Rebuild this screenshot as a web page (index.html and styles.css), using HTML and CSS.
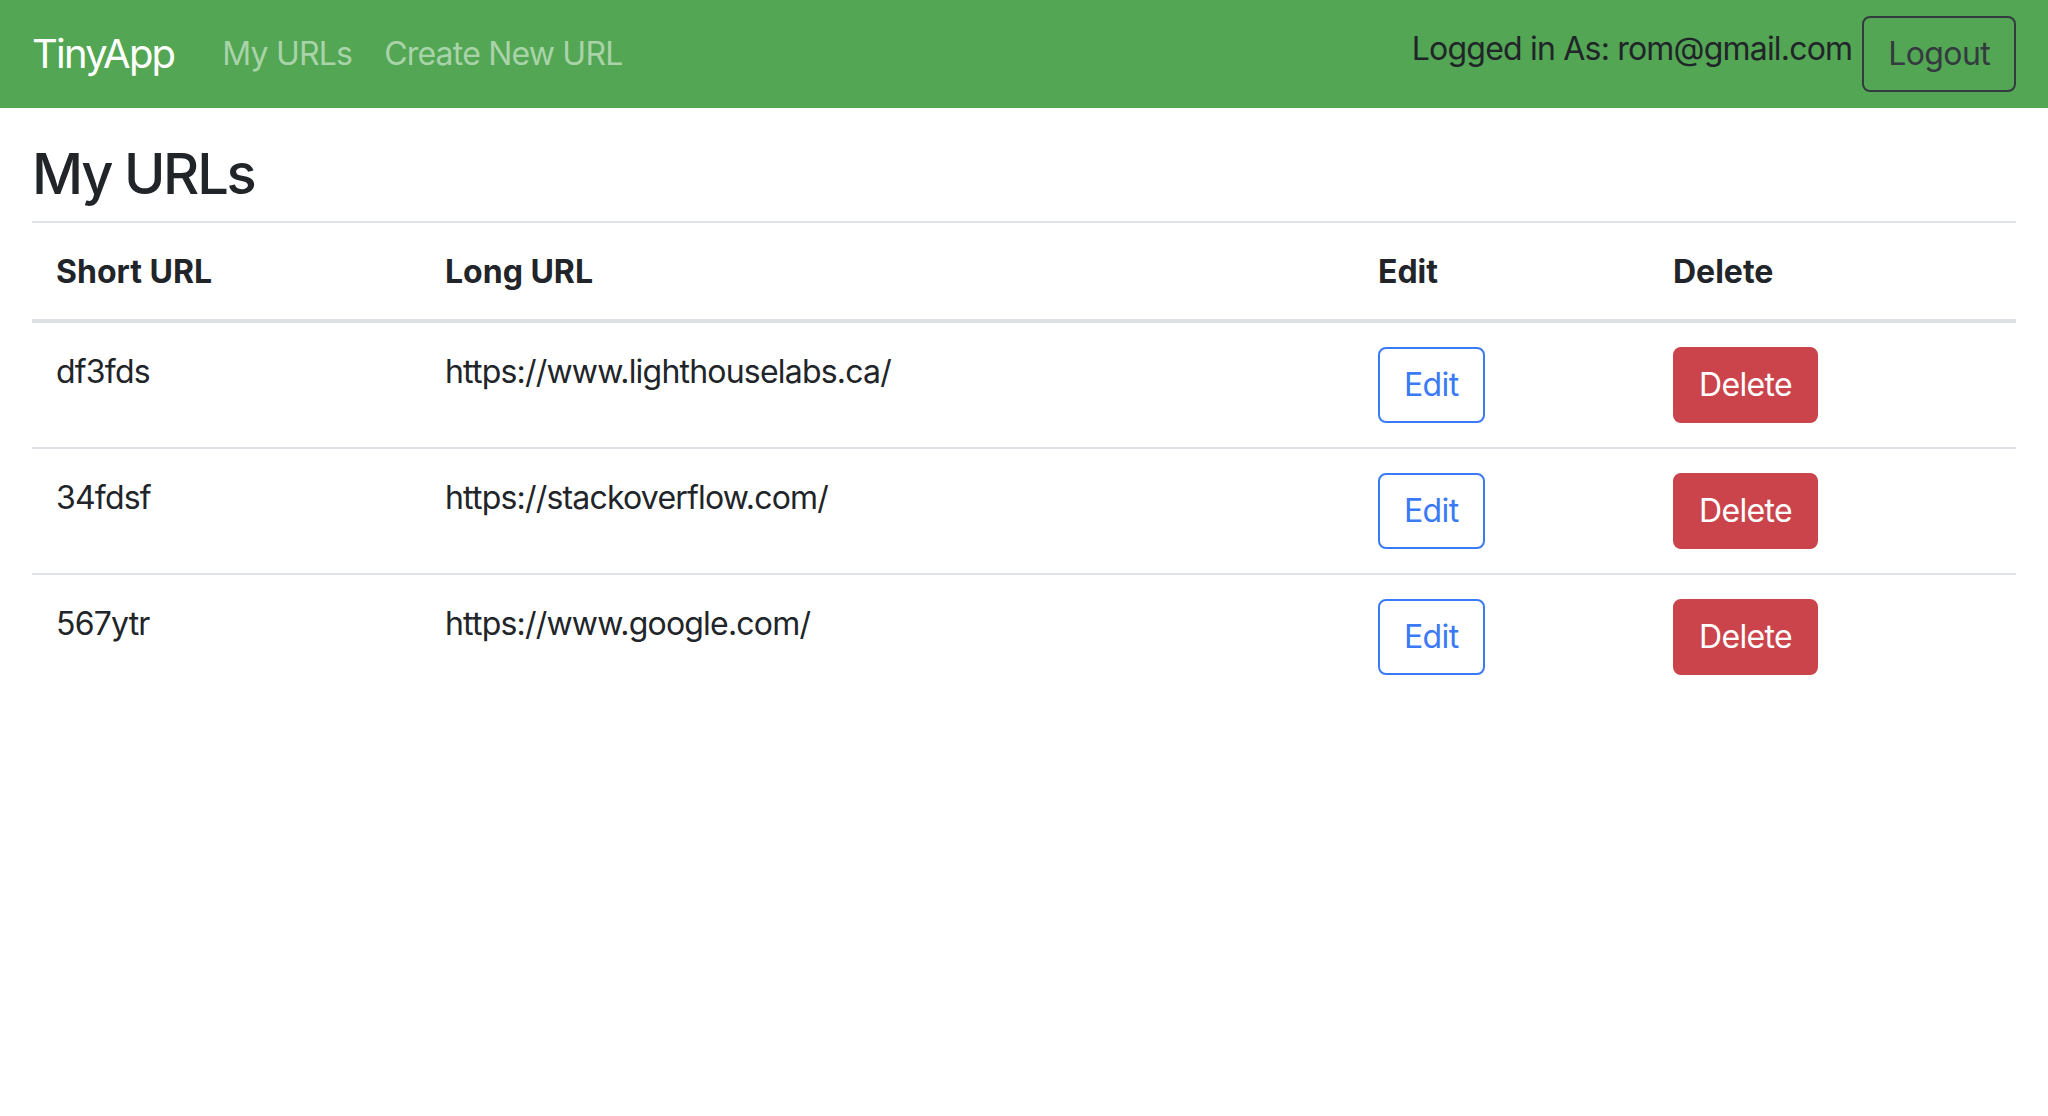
FILE: index.html
```html
<!DOCTYPE html>
<html lang="en">
<head>
<meta charset="utf-8">
<title>TinyApp</title>
<link rel="stylesheet" href="styles.css">
</head>
<body>
<nav class="navbar">
  <a class="brand" href="#">TinyApp</a>
  <ul class="nav-links">
    <li><a class="nav-link" href="#">My URLs</a></li>
    <li><a class="nav-link" href="#">Create New URL</a></li>
  </ul>
  <div class="user">
    <span class="logged">Logged in As: rom@gmail.com</span>
    <button class="btn btn-outline-dark">Logout</button>
  </div>
</nav>
<main class="container">
  <h3 class="title">My URLs</h3>
  <table class="url-table">
    <colgroup>
      <col class="col-short">
      <col class="col-long">
      <col class="col-edit">
      <col class="col-delete">
    </colgroup>
    <thead>
      <tr><th>Short URL</th><th>Long URL</th><th>Edit</th><th>Delete</th></tr>
    </thead>
    <tbody>
      <tr>
        <td class="text-cell">df3fds</td><td class="text-cell">https://www.lighthouselabs.ca/</td>
        <td><button class="btn btn-outline-primary">Edit</button></td>
        <td><button class="btn btn-danger">Delete</button></td>
      </tr>
      <tr>
        <td class="text-cell">34fdsf</td><td class="text-cell">https://stackoverflow.com/</td>
        <td><button class="btn btn-outline-primary">Edit</button></td>
        <td><button class="btn btn-danger">Delete</button></td>
      </tr>
      <tr>
        <td class="text-cell">567ytr</td><td class="text-cell">https://www.google.com/</td>
        <td><button class="btn btn-outline-primary">Edit</button></td>
        <td><button class="btn btn-danger">Delete</button></td>
      </tr>
    </tbody>
  </table>
</main>
</body>
</html>
```
FILE: styles.css
```css
* { box-sizing: border-box; }
html, body { margin: 0; padding: 0; }
body {
  font-family: Inter, "Noto Sans", "Liberation Sans", sans-serif;
  font-size: 32px;
  line-height: 1.5;
  letter-spacing: -0.025em;
  color: #212529;
  background: #fff;
}
.navbar {
  display: flex;
  align-items: center;
  height: 108px;
  padding: 16px 32px;
  background: #53a653;
}
.brand {
  font-size: 40px;
  line-height: 56px;
  letter-spacing: -0.045em;
  padding: 10px 0;
  margin-right: 32px;
  color: #fff;
  text-decoration: none;
}
.nav-links {
  display: flex;
  list-style: none;
  margin: 0;
  padding: 0;
}
.nav-link {
  display: block;
  padding: 16px;
  color: #a9d3a9;
  text-decoration: none;
}
.user {
  margin-left: auto;
  display: flex;
  align-items: center;
  gap: 10px;
}
.logged {
  color: #212529;
  padding-bottom: 10px;
}
.btn {
  font-family: inherit;
  font-size: 32px;
  line-height: 48px;
  letter-spacing: -0.02em;
  padding: 12px 24px;
  border: 2px solid transparent;
  border-radius: 8px;
  background: transparent;
  cursor: pointer;
}
.btn-outline-dark { color: #343a40; border-color: #343a40; }
.btn-outline-primary { color: #3a7af6; border-color: #3a7af6; }
.btn-danger { color: #fff; background: #cb444b; border-color: #cb444b; }
.container { padding: 33px 32px 0; }
.title {
  font-size: 56px;
  font-weight: 500;
  line-height: 1.2;
  letter-spacing: -0.04em;
  margin: 0 0 13px;
}
.url-table {
  width: 100%;
  table-layout: fixed;
  border-collapse: collapse;
}
.col-short { width: 389px; }
.col-long { width: 933px; }
.col-edit { width: 295px; }
.col-delete { width: 367px; }
.url-table th, .url-table td {
  text-align: left;
  vertical-align: top;
  padding: 24px;
  border-top: 2px solid #dee2e6;
}
.url-table th {
  font-weight: 700;
  letter-spacing: 0;
  padding-top: 25px;
  padding-bottom: 23px;
}
.url-table td.text-cell {
  padding-top: 25px;
  padding-bottom: 23px;
}
.url-table thead th {
  vertical-align: bottom;
  border-bottom: 4px solid #dee2e6;
}
```
